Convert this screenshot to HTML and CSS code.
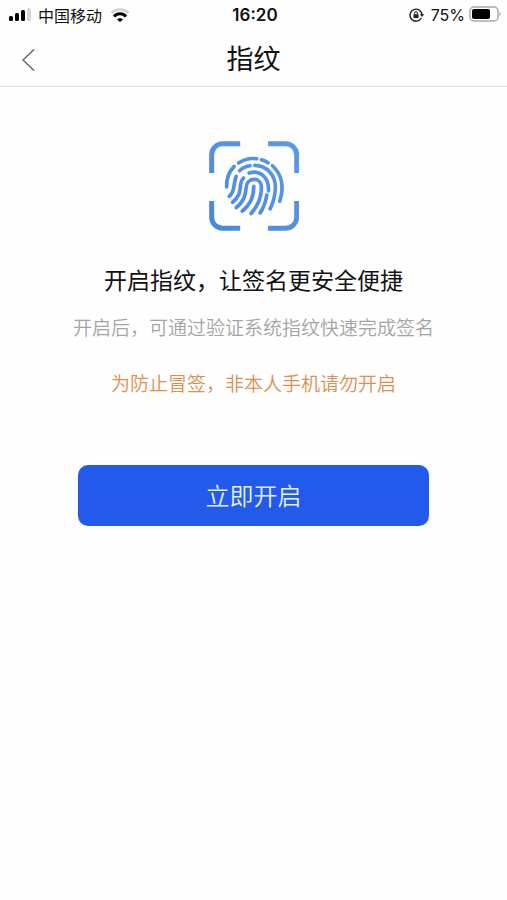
FILE: index.html
```html
<!DOCTYPE html>
<html lang="zh-CN">
<head>
<meta charset="utf-8">
<meta name="viewport" content="width=device-width, initial-scale=1">
<title>指纹</title>
<link rel="stylesheet" href="styles.css">
</head>
<body>
<div class="status">
  <div class="status-side">
    <svg class="signal" width="23" height="14" viewBox="0 0 23 14" aria-hidden="true">
      <rect x="0" y="8" width="4" height="5" rx="1.5"/>
      <rect x="6" y="5" width="4" height="8" rx="1.5"/>
      <rect x="12" y="2" width="4" height="11" rx="1.5"/>
      <rect x="18" y="0" width="4" height="13" rx="1.5" fill="#d6d6d6"/>
    </svg>
    <span class="carrier">中国移动</span>
    <svg class="wifi" width="20" height="14" viewBox="0 0 20 14" fill="none" stroke-width="2.6" aria-hidden="true">
      <path d="M1.500 5A12 12 0 0 1 18.500 5" stroke="#d0d0d0"/>
      <path d="M4 8.500A8 8 0 0 1 16 8.500" stroke="#000" stroke-width="3"/>
      <path d="M10 14L7 11.500A4.500 4.500 0 0 1 13 11.500Z" fill="#000"/>
    </svg>
  </div>
  <span class="clock">16:20</span>
  <div class="status-side status-right">
    <svg class="lock" width="16" height="14" viewBox="0 0 16 14" fill="none" stroke="#222" stroke-width="1.4" aria-hidden="true">
      <path d="M12.300 10A6 6 0 1 1 13 7"/>
      <path d="M10.800 6.300H15.200L13 9Z" fill="#222" stroke="none"/>
      <rect x="4.500" y="6.200" width="5" height="3.800" rx=".5" fill="#222" stroke="none"/>
      <path d="M5.600 6.500V5A1.400 1.400 0 0 1 8.400 5V6.500" stroke-width="1"/>
    </svg>
    <span class="percent">75%</span>
    <svg class="battery" width="32" height="17" viewBox="0 0 32 17" aria-hidden="true">
      <rect x="1" y="1" width="28" height="14" rx="4" fill="#fff" stroke="#a8a8a8" stroke-width="1.5"/>
      <rect x="3" y="3" width="18" height="10" rx="2"/>
      <path d="M30.500 5.500Q33 8 30.500 10.500Z" fill="#a8a8a8"/>
    </svg>
  </div>
</div>
<header class="nav">
  <button class="back" type="button" aria-label="返回">
    <svg width="13" height="22" viewBox="0 0 13 22" fill="none" stroke="#666" stroke-width="1.5" aria-hidden="true"><path d="M12 .5L1 11L12 21.500"/></svg>
  </button>
  <h1 class="title">指纹</h1>
</header>
<main class="content">
  <svg class="print" width="90" height="90" viewBox="27 27 271 270" fill="none" aria-hidden="true">
    <defs>
      <linearGradient id="blue" gradientUnits="userSpaceOnUse" x1="27" y1="297" x2="298" y2="27">
        <stop offset="0" stop-color="#4888dc"/>
        <stop offset="1" stop-color="#5c9ae8"/>
      </linearGradient>
    </defs>
    <g stroke="url(#blue)" stroke-width="15">
      <path d="M35 123V68A33 33 0 0 1 68 35H121"/>
      <path d="M205 35H258A33 33 0 0 1 291 68V123"/>
      <path d="M35 207V256A33 33 0 0 0 68 289H121"/>
      <path d="M205 289H258A33 33 0 0 0 291 256V207"/>
    </g>
    <g stroke="url(#blue)" stroke-width="11" stroke-linecap="round">
      <path d="M80 165Q79 127 103 103"/>
      <path d="M116 93Q141 76 171 80"/>
      <path d="M185 83Q196 86 205 92"/>
      <path d="M218 101C244 125 255 160 240 208"/>
      <path d="M88 193C107 179 99 154 109 133"/>
      <path d="M119 116Q133 103 151 101"/>
      <path d="M165 100C202 101 227 130 227 165Q226 201 211 231"/>
      <path d="M98 211C133 184 112 157 131 138"/>
      <path d="M148 123C178 113 209 134 206 177"/>
      <path d="M201 189Q196 221 181 243"/>
      <path d="M109 227C133 207 137 190 139 166C141 134 185 135 185 165C185 196 173 223 154 245"/>
      <path d="M162 163C162 195 149 221 127 238"/>
    </g>
  </svg>
  <h2 class="headline">开启指纹，让签名更安全便捷</h2>
  <p class="hint">开启后，可通过验证系统指纹快速完成签名</p>
  <p class="warning">为防止冒签，非本人手机请勿开启</p>
  <button class="primary" type="button">立即开启</button>
</main>
</body>
</html>
```
FILE: styles.css
```css
* { box-sizing: border-box; }

body {
  margin: 0;
  background: #fefefe;
  color: #111;
  font-family: "Noto Sans CJK SC", sans-serif;
}

.status {
  display: grid;
  grid-template-columns: 1fr auto 1fr;
  align-items: center;
  height: 29px;
  padding: 0 6px 0 9px;
  font-size: 16px;
  line-height: 24px;
}

.status-side {
  display: flex;
  align-items: center;
}

.status-right { justify-content: flex-end; }

.carrier { margin: 0 8px 0 6px; }

.clock,
.percent { font-family: Inter, sans-serif; }

.clock {
  font-size: 17px;
  font-weight: 600;
}

.percent { margin: 0 4px 0 6px; }

.nav {
  display: grid;
  grid-template-columns: 56px 1fr 56px;
  align-items: center;
  height: 58px;
  border-bottom: 1px solid #e4e4e4;
}

.back {
  display: flex;
  justify-content: center;
  padding: 4px 0 0;
  border: 0;
  background: none;
}

.title {
  margin: 0;
  font-size: 27px;
  font-weight: 400;
  line-height: 56px;
  text-align: center;
}

.content {
  display: flex;
  flex-direction: column;
  align-items: center;
  padding: 54px 78px 0;
  text-align: center;
  white-space: nowrap;
}

.headline {
  margin: 30px 0 0;
  font-size: 23px;
  font-weight: 400;
  line-height: 36px;
}

.hint,
.warning {
  margin: 16px 0 0;
  font-size: 19px;
  font-weight: 350;
  line-height: 28px;
}

.hint { color: #a4a4a4; }

.warning {
  margin-top: 28px;
  color: #dc9050;
}

.primary {
  width: 100%;
  height: 61px;
  margin-top: 68px;
  padding: 0 0 2px;
  border: 0;
  border-radius: 10px;
  background: #225aec;
  color: #e8f0ff;
  font-family: inherit;
  font-size: 24px;
  font-weight: 350;
}
```
